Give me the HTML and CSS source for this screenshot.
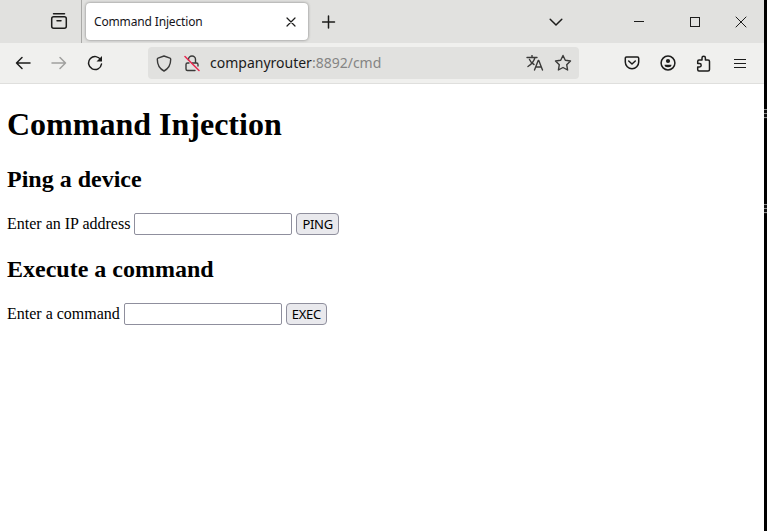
FILE: index.html
```html
<!DOCTYPE html>
<html lang="en">
<head>
<meta charset="utf-8">
<title>Command Injection</title>
<link rel="stylesheet" href="styles.css">
</head>
<body>
<div class="desktop">
  <div class="window">
    <header class="tabstrip">
      <div class="view">
        <svg class="icon" width="18" height="18" viewBox="0 0 18 18"><path d="M3.5 1.7h11"/><rect x="1.7" y="4.7" width="14.6" height="11.6" rx="2"/><path d="M7 8.8h4"/></svg>
      </div>
      <div class="tab">
        <span class="tab-title">Command Injection</span>
        <svg class="icon thin" width="10" height="10" viewBox="0 0 10 10"><path d="M1 1l8 8M9 1L1 9"/></svg>
      </div>
      <svg class="icon newtab" width="14" height="14" viewBox="0 0 14 14"><path d="M6.5 1v12M.5 7h12"/></svg>
      <div class="controls">
        <svg class="icon" width="14" height="10" viewBox="0 0 14 10"><path d="M1.2 2.2L7 8l5.800-5.800"/></svg>
        <svg class="icon crisp minimize" width="10" height="12" viewBox="0 0 10 12"><path d="M0 5.500h10"/></svg>
        <svg class="icon crisp" width="10" height="10" viewBox="0 0 10 10"><rect x=".5" y=".5" width="9" height="9"/></svg>
        <svg class="icon close" width="12" height="12" viewBox="0 0 12 12"><path d="M1 1l10 10M11 1L1 11"/></svg>
      </div>
    </header>
    <nav class="toolbar">
      <div class="history">
        <svg class="icon" width="16" height="14" viewBox="0 0 16 14"><path d="M15 7H1.500M7 1.500L1.500 7 7 12.500"/></svg>
        <svg class="icon disabled" width="16" height="14" viewBox="0 0 16 14"><path d="M1 7h13.500M9 1.500L14.500 7 9 12.500"/></svg>
        <svg class="icon" width="16" height="16" viewBox="0 0 16 16"><path d="M13.800 5A6.500 6.500 0 1 0 14.500 9"/><path class="solid" d="M15 1v5.500H9.500z"/></svg>
      </div>
      <div class="address">
        <svg class="icon soft" width="16" height="17" viewBox="0 0 16 17"><path d="M8 1L14 3.200q.700.300.700 1.100C14.700 10 12.500 13.800 8 16 3.500 13.800 1.300 10 1.300 4.300q0-.8.7-1.100z"/></svg>
        <svg class="icon soft lock" width="16" height="17" viewBox="0 0 16 17"><path d="M4.500 5V4.500a3.500 3.500 0 0 1 7 0V8M8 8h4.500q1.500 0 1.500 1.500V11M11 15.500H3.500q-1.500 0-1.500-1.500V9.500Q2 8 3.500 8H5"/><path class="slash" d="M1 1.500l14 14"/></svg>
        <span class="url">companyrouter<span class="path">:8892/cmd</span></span>
        <svg class="icon soft" width="18" height="16" viewBox="0 0 18 16"><path d="M1 2.500h10M6 .5v2M9 2.500Q7.500 8 2 11.500M3.500 4.500Q5 8 8 9.500M8.500 15l3.700-9.500h.6l3.700 9.500M9.800 12h5.400"/></svg>
        <svg class="icon soft star" width="18" height="18" viewBox="0 0 18 18"><path d="M9 1.500l2.300 4.800 5.200.7-3.800 3.700.9 5.300L9 13.500 4.400 16l.9-5.300L1.500 7l5.200-.7z"/></svg>
      </div>
      <div class="actions">
        <svg class="icon" width="16" height="16" viewBox="0 0 16 16"><path d="M2.500 2h10.900q1.300 0 1.300 1.300V7a6.700 6.700 0 0 1-13.400 0V3.300Q1.300 2 2.500 2zM4.700 6l3.300 3 3.300-3"/></svg>
        <svg class="icon" width="16" height="16" viewBox="0 0 16 16"><circle cx="8" cy="8" r="6.900"/><circle class="solid" cx="8" cy="6" r="2.100"/><path class="solid" d="M4.500 9.800h7Q11.500 12.300 8 12.300T4.500 9.800z"/></svg>
        <svg class="icon" width="16" height="17" viewBox="0 0 16 17"><path d="M6 5V3a1.700 1.700 0 0 1 3.400 0v2H12q1.500 0 1.500 1.500v8q0 1.500-1.500 1.500H3q-1.300 0-1.300-1.500V12H3.500a1.700 1.700 0 0 0 0-3.400H1.700V6.500Q1.700 5 3 5z"/></svg>
        <svg class="icon crisp menu" width="12" height="11" viewBox="0 0 12 11"><path d="M0 1.500h12M0 5.500h12M0 9.500h12"/></svg>
      </div>
    </nav>
    <main class="page">
      <h1>Command Injection</h1>
      <h2>Ping a device</h2>
      <form class="row">
        <label for="ip">Enter an IP address</label>
        <input id="ip" type="text">
        <button type="button">PING</button>
      </form>
      <h2>Execute a command</h2>
      <form class="row">
        <label for="cmd">Enter a command</label>
        <input id="cmd" type="text">
        <button type="button">EXEC</button>
      </form>
    </main>
  </div>
  <aside class="backdrop"><i class="mark"></i><i class="mark"></i></aside>
</div>
</body>
</html>
```

FILE: styles.css
```css
* { box-sizing: border-box; }
body { margin: 0; overflow: hidden; background: #fff; color: #000; }
.desktop { display: flex; height: 531px; }
.window { width: 764px; display: flex; flex-direction: column; }

.icon { display: block; flex: none; fill: none; stroke: #1c1c1b; stroke-width: 1.5; stroke-linecap: round; stroke-linejoin: round; }
.icon .solid { fill: #1c1c1b; stroke: none; }
.soft { stroke: #3a3a39; stroke-width: 1.4; }
.thin { stroke-width: 1.2; }
.close { stroke-width: 1; }
.crisp { stroke-width: 1; stroke-linecap: butt; stroke-linejoin: miter; shape-rendering: crispEdges; }
.disabled { stroke: #a0a09e; }
.slash { stroke: #e8274f; stroke-width: 1.5; }

.tabstrip { display: flex; align-items: center; height: 43px; flex: none; background: #e1e1df; }
.view { width: 82px; height: 43px; padding: 12px 0 0 50px; border-right: 1px solid #a9a9a7; }
.tab { display: flex; align-items: center; justify-content: space-between; width: 222px; height: 37px; margin-left: 4px; padding: 0 12px 0 8px; border-radius: 4px; background: #fff; box-shadow: 0 0 3px rgba(0, 0, 0, .45); }
.tab-title { font: 12px/18px "Noto Sans", sans-serif; color: #15141a; white-space: nowrap; letter-spacing: -.15px; }
.newtab { margin-left: 14px; }
.controls { display: flex; align-items: center; margin-left: auto; padding-right: 17px; }
.minimize { margin: 0 46px 0 71px; }
.controls .crisp + .close { margin-left: 35px; }

.toolbar { display: flex; align-items: center; height: 41px; flex: none; background: #f0f0ee; border-bottom: 1px solid #dfdfdd; }
.history { display: flex; align-items: center; gap: 20px; width: 148px; padding-left: 15px; }
.address { display: flex; align-items: center; width: 431px; height: 32px; padding: 0 7px 0 8px; border-radius: 4px; background: #e1e1df; }
.lock { margin-left: 12px; }
.url { flex: 1; margin-left: 10px; font: 14px/20px "Noto Sans", sans-serif; color: #1b1b1b; white-space: nowrap; }
.path { color: #858584; }
.star { margin-left: 10px; }
.actions { display: flex; align-items: center; gap: 20px; margin-left: auto; padding-right: 18px; }
.menu { margin-left: 2px; }

.page { flex: 1; padding: 0 7px; font: 16px/18px "Liberation Serif", serif; }
h1 { margin: 22px 0 0; font-size: 32px; line-height: 37px; }
h2 { margin: 23px 0 0; font-size: 24px; line-height: 27px; }
.row { display: flex; align-items: center; gap: 4px; height: 22px; margin-top: 20px; }
.row + h2 { margin-top: 21px; }
input { width: 158px; height: 22px; margin: 0; border: 1px solid #8f8f9d; border-radius: 2px; background: #fff; }
button { height: 22px; margin: 0; padding: 0 5px; border: 1px solid #8f8f9d; border-radius: 4px; background: #e9e9ed; color: #000; font: 13px/20px "Noto Sans", sans-serif; letter-spacing: -.3px; }

.backdrop { display: flex; flex-direction: column; gap: 85px; width: 3px; padding-top: 109px; background: #000; }
.mark { width: 3px; height: 10px; background: repeating-linear-gradient(#8b8b8b 0 1px, #111 1px 4px); }
```
